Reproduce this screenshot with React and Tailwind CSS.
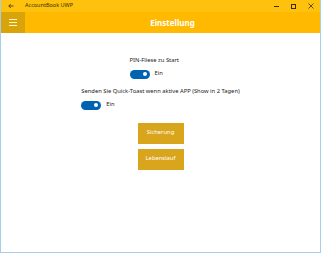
import React from "react";

function Toggle() {
  return (
    <div className="w-[20px] h-[9px] rounded-full bg-[#0063b1] flex items-center justify-end pr-[3px]">
      <div className="w-[4px] h-[4px] rounded-full bg-white" />
    </div>
  );
}

export default function App() {
  return (
    <div
      className="w-[321px] h-[253px] bg-white border-x border-b border-[#a8cdea] flex flex-col overflow-hidden"
      style={{ fontFamily: '"Noto Sans", "Open Sans", sans-serif' }}
    >
      <div className="h-[12px] bg-[#fec20e] flex items-center text-[#3a2e00]">
        <div className="w-[20px] flex justify-center">
          <svg width="6" height="6" viewBox="0 0 6 6">
            <path d="M5.5 3H0.8M2.8 1L0.8 3l2 2" stroke="#3a2e00" strokeWidth="0.8" fill="none" />
          </svg>
        </div>
        <div className="ml-[4px] text-[5.5px] leading-none">AccountBook UWP</div>
        <div className="flex-1" />
        <div className="w-[17px] flex justify-center">
          <div className="w-[5px] h-[1px] bg-[#3a2e00]" />
        </div>
        <div className="w-[17px] flex justify-center">
          <div className="w-[5px] h-[5px] border border-[#3a2e00]" />
        </div>
        <div className="w-[18px] flex justify-center">
          <svg width="6" height="6" viewBox="0 0 6 6">
            <path d="M0.5 0.5L5.5 5.5M5.5 0.5L0.5 5.5" stroke="#3a2e00" strokeWidth="0.8" />
          </svg>
        </div>
      </div>
      <div className="h-[21px] bg-[#ffb900] flex">
        <div className="w-[24px] h-full bg-[#d9a30a] flex flex-col items-center justify-center gap-[2px]">
          <div className="w-[8px] h-[1px] bg-[#fff3c8]" />
          <div className="w-[8px] h-[1px] bg-[#fff3c8]" />
          <div className="w-[8px] h-[1px] bg-[#fff3c8]" />
        </div>
        <div className="flex-1 flex items-center justify-center text-white font-bold text-[8px]">
          Einstellung
        </div>
      </div>
      <div className="flex-1 flex flex-col items-center pt-[25px] text-[#222] text-[5.8px] leading-none">
        <div className="w-[62px] flex flex-col gap-[6px]">
          <div>PIN-Fliese zu Start</div>
          <div className="flex items-center gap-[5px]">
            <Toggle />
            <span>Ein</span>
          </div>
        </div>
        <div className="flex flex-col gap-[6px] mt-[10px]">
          <div className="whitespace-nowrap">Senden Sie Quick-Toast wenn aktive APP (Show in 2 Tagen)</div>
          <div className="flex items-center gap-[5px]">
            <Toggle />
            <span>Ein</span>
          </div>
        </div>
        <div className="mt-[13px] flex flex-col gap-[5px] items-center">
          <div className="w-[46px] h-[21px] bg-[#d9a51c] text-white flex items-center justify-center">Sicherung</div>
          <div className="w-[46px] h-[21px] bg-[#d9a51c] text-white flex items-center justify-center">Lebenslauf</div>
        </div>
      </div>
    </div>
  );
}
